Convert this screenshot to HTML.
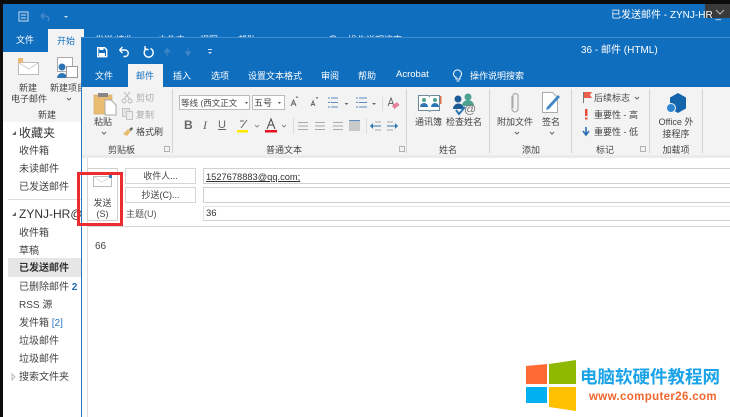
<!DOCTYPE html>
<html><head><meta charset="utf-8">
<style>
html,body{margin:0;padding:0;background:#fff}
#p{position:relative;width:730px;height:417px;overflow:hidden;background:#fff;font-family:"Liberation Sans","Noto Sans CJK SC",sans-serif;color:#444;font-size:9px}
#p div{position:absolute;white-space:nowrap}
.t{line-height:14px}
.w{color:#fff}
.c{text-align:center}
.n{font-size:10px;color:#444;left:19px;line-height:16px}
.sep{background:#d4d4d4;width:1px}
.g{color:#555}
svg{position:absolute;overflow:visible}
</style></head><body><div id="p">
<!-- frame -->
<div style="left:0;top:0;width:730px;height:4px;background:#0c0c0c"></div>
<div style="left:0;top:0;width:3px;height:417px;background:#0c0c0c"></div>
<div style="left:3px;top:4px;width:727px;height:48px;background:#106ebe"></div>
<div style="left:705px;top:4px;width:25px;height:14px;background:#3a3a3a"></div>
<svg style="left:0;top:0" width="730" height="60">
<path d="M19 12h9v9h-9zM21 15h5M21 18h5" fill="none" stroke="#a9c8e6" stroke-width="1.200"/>
<path d="M41 16l3-3M41 16l3 3M41 16h5a3 3 0 0 1 2 5" fill="none" stroke="#4a8bc8" stroke-width="1.300"/>
<path d="M64 16h4l-2 2z" fill="#cfe2f3"/>
<path d="M716 10l4 4 4-4" fill="none" stroke="#bbb" stroke-width="1"/>
<path d="M337 40a4 4 0 1 1 0-.1" fill="none" stroke="#cfe2f3"/>
</svg>
<div class="t w" style="left:611px;top:9px;font-size:10px">已发送邮件 - ZYNJ-HR _</div>
<div class="t w" style="left:16px;top:33px">文件</div>
<div class="t w" style="left:95px;top:33px">发送/接收</div>
<div class="t w" style="left:158px;top:33px">文件夹</div>
<div class="t w" style="left:200px;top:33px">视图</div>
<div class="t w" style="left:238px;top:33px">帮助</div>
<div class="t w" style="left:348px;top:33px">操作说明搜索</div>
<div style="left:48px;top:29px;width:36px;height:23px;background:#f3f3f3"></div>
<div class="t" style="left:57px;top:34px;color:#106ebe">开始</div>
<!-- outer ribbon -->
<div style="left:3px;top:52px;width:78px;height:70px;background:#f3f3f3"></div>
<svg style="left:0;top:50px" width="82" height="50">
<rect x="18.500" y="12.500" width="20" height="12" fill="#fff" stroke="#bbb"/><path d="M19 13l10 6 9-6" fill="none" stroke="#ccc"/><rect x="18" y="8" width="5" height="5" fill="#e9b872"/>
<rect x="57.500" y="7.500" width="15" height="14" fill="#fff" stroke="#aaa"/><circle cx="62" cy="17" r="3.500" fill="#2e75b6"/><path d="M57 28a5 5 0 0 1 10 0z" fill="#2e75b6"/><rect x="66.500" y="16.500" width="11" height="11" fill="#fff" stroke="#999"/>
<path d="M67 48l2 2 2-2" fill="none" stroke="#666"/>
</svg>
<div class="t c" style="left:8px;top:81px;width:40px">新建</div>
<div class="t c" style="left:6px;top:92px;width:46px">电子邮件</div>
<div class="t" style="left:50px;top:81px">新建项目</div>
<div class="t" style="left:38px;top:108px">新建</div>
<!-- folder pane -->
<div style="left:3px;top:122px;width:78px;height:295px;background:#fff"></div>
<svg style="left:11px;top:128px" width="6" height="90"><path d="M1 7l4-4v4zM1 88l4-4v4z" fill="#666"/></svg>
<div style="left:19px;top:124px;font-size:12px;line-height:18px;color:#333">收藏夹</div>
<div class="n" style="top:144px">收件箱</div>
<div class="n" style="top:162px">未读邮件</div>
<div class="n" style="top:180px">已发送邮件</div>
<div style="left:8px;top:199px;width:73px;height:1px;background:#ddd"></div>
<div style="left:19px;top:205px;font-size:12px;line-height:18px;color:#333;width:62px;overflow:hidden">ZYNJ-HR@</div>
<div class="n" style="top:226px">收件箱</div>
<div class="n" style="top:244px">草稿</div>
<div style="left:8px;top:258px;width:73px;height:19px;background:#e6e6e6"></div>
<div class="n" style="top:261px;font-weight:bold;color:#333">已发送邮件</div>
<div class="n" style="top:280px;width:62px;overflow:hidden">已删除邮件 <b style="color:#1e6bb0">2</b></div>
<div class="n" style="top:298px">RSS 源</div>
<div class="n" style="top:316px">发件箱 <span style="color:#2a77bd">[2]</span></div>
<div class="n" style="top:334px">垃圾邮件</div>
<div class="n" style="top:352px">垃圾邮件</div>
<div class="n" style="top:370px">搜索文件夹</div>
<svg style="left:11px;top:373px" width="6" height="8"><path d="M1 1l3 3-3 3z" fill="none" stroke="#bbb"/></svg>
<!-- compose window -->
<div style="left:81px;top:37px;width:649px;height:380px;background:#fff;border-left:1px solid #2a77bd;box-sizing:border-box"></div>
<div style="left:82px;top:37px;width:648px;height:50px;background:#106ebe;border-top:1px solid #3f8ccf;box-sizing:border-box"></div>
<svg style="left:82px;top:37px" width="150" height="28">
<path d="M15.700 10.700h7l2 2v7h-9z" fill="none" stroke="#fff" stroke-width="1.400"/><rect x="17" y="16" width="6" height="3.500" fill="#fff"/><rect x="17.500" y="10.500" width="4" height="2.500" fill="#fff"/>
<path d="M37.500 13l3-3M37.500 13l3 3M37.500 13h6a3.300 3.300 0 0 1 0 6.500h-2" fill="none" stroke="#fff" stroke-width="1.400"/>
<path d="M68.500 11.500a4.500 4.500 0 1 1-4 .2M63 9v3.500h3.500" fill="none" stroke="#fff" stroke-width="1.400"/>
<path d="M85 19v-5M82.500 15l2.500-3.500 2.500 3.500z" fill="#3f86c7" stroke="#3f86c7"/>
<path d="M106 11v5M103.500 15l2.500 3.500 2.500-3.500z" fill="#3f86c7" stroke="#3f86c7"/>
<path d="M126 15h4l-2 2z" fill="#cfe2f3"/>
<rect x="126" y="12" width="4" height="1" fill="#cfe2f3"/>
</svg>
<div class="t w" style="left:581px;top:44px;font-size:10px">36 - 邮件 (HTML)</div>
<div class="t w" style="left:95px;top:69px">文件</div>
<div style="left:128px;top:64px;width:35px;height:23px;background:#f3f3f3"></div>
<div class="t" style="left:136px;top:69px;color:#106ebe">邮件</div>
<div class="t w" style="left:173px;top:69px">插入</div>
<div class="t w" style="left:211px;top:69px">选项</div>
<div class="t w" style="left:248px;top:69px">设置文本格式</div>
<div class="t w" style="left:321px;top:69px">审阅</div>
<div class="t w" style="left:358px;top:69px">帮助</div>
<div class="t w" style="left:396px;top:68px;font-size:9.500px">Acrobat</div>
<svg style="left:452px;top:69px" width="12" height="14"><path d="M3 8a4 4 0 1 1 5 0v2H4V8zM4.500 12h3" fill="none" stroke="#fff"/></svg>
<div class="t w" style="left:470px;top:69px">操作说明搜索</div>
<!-- ribbon -->
<div style="left:82px;top:87px;width:648px;height:68px;background:#f3f3f3"></div>
<div style="left:82px;top:155px;width:648px;height:3px;background:#ebebeb"></div>
<div class="sep" style="left:172px;top:89px;height:64px"></div>
<div class="sep" style="left:406px;top:89px;height:64px"></div>
<div class="sep" style="left:489px;top:89px;height:64px"></div>
<div class="sep" style="left:571px;top:89px;height:64px"></div>
<div class="sep" style="left:649px;top:89px;height:64px"></div>
<div class="sep" style="left:702px;top:89px;height:64px"></div>
<!-- clipboard -->
<svg style="left:92px;top:90px" width="80" height="60">
<rect x="2" y="5" width="18" height="19" fill="#e8bd72" stroke="#c9a45f" stroke-width=".6"/><rect x="6" y="3" width="10" height="4" fill="#888"/>
<path d="M13 10h6l5 5v10H13z" fill="#fff" stroke="#aaa"/>
<path d="M32 2l6 7M38 2l-6 7" stroke="#bbb" fill="none"/><circle cx="32" cy="11" r="2" fill="none" stroke="#bbb"/><circle cx="38" cy="11" r="2" fill="none" stroke="#bbb"/>
<rect x="30.500" y="18.500" width="7" height="8" fill="#e4e4e4" stroke="#c4c4c4"/><rect x="34.500" y="21.500" width="6" height="8" fill="#eee" stroke="#c4c4c4"/>
<path d="M31 44l5-5 3 2-4 5z" fill="#e8bd72"/><path d="M37 39l3-2 1 2-2 2z" fill="#666"/>
</svg>
<div class="t c" style="left:90px;top:115px;width:26px">粘贴</div>
<svg style="left:101px;top:131px" width="6" height="4"><path d="M1 1l2 2 2-2" fill="none" stroke="#666"/></svg>
<div class="t" style="left:136px;top:91px;color:#aaa">剪切</div>
<div class="t" style="left:136px;top:108px;color:#aaa">复制</div>
<div class="t" style="left:136px;top:125px;color:#444">格式刷</div>
<div class="t" style="left:108px;top:143px">剪贴板</div>
<!-- font -->
<div style="left:179px;top:95px;width:71px;height:15px;background:#fff;border:1px solid #bbb;box-sizing:border-box;line-height:14px;padding-left:1px;font-size:8.500px;overflow:hidden">等线 (西文正文</div>
<div style="left:252px;top:95px;width:33px;height:15px;background:#fff;border:1px solid #bbb;box-sizing:border-box;line-height:14px;padding-left:1px;font-size:9px">五号</div>
<svg style="left:160px;top:85px" width="330" height="70">
<path d="M85 17h3l-1.500 2zM118 17h3l-1.500 2z" fill="#555"/>
<path d="M131 21l2.500-6 2.500 6M132 19h3M151 21l2-5 2 5M152 19.500h2" fill="none" stroke="#666"/>
<path d="M136 13l1-1.500 1 1.500M156 12l1 1.500 1-1.500" fill="none" stroke="#444" stroke-width=".6"/>
<path d="M168 13h2M171 13h7M168 17.500h2M171 17.500h7M168 22h2M171 22h7" stroke="#5b8ec0" fill="none"/>
<path d="M184.500 18h4l-2 2z" fill="#666"/>
<path d="M196 13h2M199 13h8M196 17.500h2M199 17.500h8M196 22h2M199 22h8" stroke="#5b8ec0" fill="none"/>
<path d="M212 18h4l-2 2z" fill="#666"/>
<path d="M222.500 12v14" stroke="#ddd"/>
<path d="M228 21l3-8 3 8M229 18.500h4" fill="none" stroke="#666"/><path d="M232 21l5-4 2.500 3-5 4z" fill="#e8819a"/>
<path d="M87 35l-6 8" stroke="#666" fill="none"/>
<path d="M80 36h4" stroke="#666"/>
<rect x="77" y="45" width="11" height="2.500" fill="#ffe800"/>
<rect x="105" y="45" width="12" height="2.500" fill="#e81123"/>
<path d="M107 44l4-10 4 10M108.500 40h5" fill="none" stroke="#444"/>
<path d="M95 40l2 2 2-2M122 40l2 2 2-2" fill="none" stroke="#777" stroke-width=".8"/>
<path d="M133.500 33v16" stroke="#ddd"/>
<path d="M138 37.500h10M138 41h10M138 44.500h10M155 37.500h10M155 41h10M155 44.500h10M173 37.500h10M173 41h10M173 44.500h10" stroke="#aaa" fill="none"/>
<rect x="189" y="36" width="11" height="10" fill="#c9c9c9"/><path d="M189 35.500h11" stroke="#5b8ec0"/>
<path d="M206.500 33v16" stroke="#ddd"/>
<path d="M215 37h6M215 45h6" stroke="#aaa" fill="none"/><path d="M210 41h11" stroke="#2e75b6"/><path d="M210 41l3-3v6z" fill="#2e75b6"/>
<path d="M227 37h6M227 45h6" stroke="#aaa" fill="none"/><path d="M227 41h11" stroke="#2e75b6"/><path d="M238 41l-3-3v6z" fill="#2e75b6"/>
</svg>
<div style="left:184px;top:118px;font-size:12px;font-weight:bold;line-height:14px;color:#666">B</div>
<div style="left:203px;top:118px;font-size:12px;font-style:italic;line-height:14px;color:#666;font-family:'Liberation Serif',serif">I</div>
<div style="left:218px;top:118px;font-size:11px;text-decoration:underline;line-height:14px;color:#666">U</div>
<div class="t" style="left:266px;top:143px">普通文本</div>
<!-- names -->
<svg style="left:415px;top:92px" width="70" height="30">
<path d="M3.500 3.500h10a2 2 0 0 1 1 1 2 2 0 0 1 1-1h9v15h-9l-1 1-1-1h-10z" fill="#fff" stroke="#6f8a98"/>
<rect x="25" y="4" width="1.500" height="8" fill="#e0704c"/>
<circle cx="9" cy="8" r="2" fill="#4da38f"/><path d="M5 15a4 4 0 0 1 8 0z" fill="#2e75b6"/><circle cx="20" cy="8" r="2" fill="#4da38f"/><path d="M16 15a4 4 0 0 1 8 0z" fill="#2e75b6"/>
<circle cx="43" cy="7" r="3.500" fill="#1e5a96"/><path d="M38 17a5.500 5.500 0 0 1 11 0z" fill="#1e5a96"/><circle cx="53" cy="5" r="3.500" fill="#4da38f"/><path d="M47 14a6 6 0 0 1 12 0z" fill="#4da38f"/><path d="M41 18l3 4 6-7" fill="none" stroke="#2e75b6" stroke-width="2"/>
</svg>
<div style="left:464px;top:102px;font-size:12px;color:#777;line-height:14px">@</div>
<div class="t" style="left:415px;top:115px">通讯簿</div>
<div class="t" style="left:446px;top:115px">检查姓名</div>
<div class="t" style="left:439px;top:143px">姓名</div>
<!-- add -->
<svg style="left:505px;top:90px" width="60" height="26">
<path d="M7 6v13a3 3 0 0 0 6 0V6a2.500 2.500 0 0 0-5 0v12" fill="none" stroke="#aaa" stroke-width="1.200"/>
<path d="M37.500 2.500h10l5 5v15h-15z" fill="#fff" stroke="#aaa"/><path d="M42 17l11-12 2 2-11 12-3 1z" fill="#3f86c7"/>
</svg>
<div class="t" style="left:497px;top:115px">附加文件</div>
<div class="t" style="left:542px;top:115px">签名</div>
<svg style="left:514px;top:131px" width="50" height="4"><path d="M1 1l2 2 2-2M36 1l2 2 2-2" fill="none" stroke="#666"/></svg>
<div class="t" style="left:522px;top:143px">添加</div>
<!-- tags -->
<svg style="left:580px;top:90px" width="14" height="50">
<path d="M3.500 2v11" stroke="#777"/><path d="M4 2h8l-2 3 2 3H4z" fill="#e8604c"/>
<rect x="5" y="19" width="2.500" height="7" fill="#e84c3d"/><rect x="5" y="27.500" width="2.500" height="2" fill="#e84c3d"/>
<path d="M6 37v7M3 41l3 4 3-4" fill="none" stroke="#2e6fb5" stroke-width="1.600"/>
</svg>
<div class="t" style="left:594px;top:91px">后续标志</div>
<svg style="left:634px;top:96px" width="6" height="4"><path d="M1 1l2 2 2-2" fill="none" stroke="#666"/></svg>
<div class="t" style="left:594px;top:108px">重要性 - 高</div>
<div class="t" style="left:594px;top:125px">重要性 - 低</div>
<div class="t" style="left:596px;top:143px">标记</div>
<!-- dialog launchers -->
<svg style="left:160px;top:145px" width="500" height="9"><path d="M4.500 1.500h5v5h-5zM239.500 1.500h5v5h-5zM480.500 1.500h5v5h-5z" fill="none" stroke="#999" stroke-width=".7"/></svg>
<!-- office addin -->
<svg style="left:664px;top:92px" width="28" height="26"><path d="M14 1l8 4.500v11L14 21l-8-4.500v-11z" fill="#1565ad"/><circle cx="7" cy="16" r="4.500" fill="#2e86d0" stroke="#f3f3f3"/></svg>
<div class="t c" style="left:654px;top:115px;width:44px">Office 外</div>
<div class="t c" style="left:654px;top:127px;width:44px">接程序</div>
<div class="t c" style="left:654px;top:143px;width:44px">加载项</div>
<!-- form -->
<div style="left:87px;top:158px;width:1px;height:259px;background:#dcdcdc"></div>
<div style="left:87px;top:168px;width:31px;height:53px;background:#fff;border:1px solid #d0d0d0;box-sizing:border-box"></div>
<svg style="left:93px;top:174px" width="22" height="14"><path d="M0.500 2.500h18v10h-18z" fill="#fff" stroke="#bbb"/><path d="M1 3l8 5 9-5" fill="none" stroke="#ddd"/><rect x="16" y="1" width="3" height="3" fill="#2e75b6"/></svg>
<div class="t c" style="left:87px;top:196px;width:31px">发送</div>
<div class="t c" style="left:87px;top:207px;width:31px">(S)</div>
<div class="c t" style="left:125px;top:168px;width:71px;height:16px;background:#fff;border:1px solid #d6d6d6;box-sizing:border-box">收件人...</div>
<div class="c t" style="left:125px;top:187px;width:71px;height:16px;background:#fff;border:1px solid #d6d6d6;box-sizing:border-box">抄送(C)...</div>
<div class="t g" style="left:126px;top:207px">主题(U)</div>
<div style="left:203px;top:168px;width:527px;height:16px;background:#fff;border:1px solid #d0d0d0;border-right:0;box-sizing:border-box"></div>
<div style="left:203px;top:187px;width:527px;height:16px;background:#fff;border:1px solid #d0d0d0;border-right:0;box-sizing:border-box"></div>
<div style="left:203px;top:206px;width:527px;height:15px;background:#fff;border:1px solid #e4e4e4;border-bottom-color:#d0d0d0;border-right:0;box-sizing:border-box"></div>
<div class="t" style="left:206px;top:170px;color:#333;text-decoration:underline;font-size:9.300px">1527678883@qq.com;</div>
<div class="t" style="left:206px;top:207px;color:#333;font-size:9.500px">36</div>
<div style="left:88px;top:226px;width:642px;height:1px;background:#d4d4d4"></div>
<div class="t" style="left:95px;top:240px;color:#444;font-size:10px">66</div>
<!-- red box -->
<div style="left:77px;top:172px;width:46px;height:54px;border:3px solid #ee2b2f;box-sizing:border-box"></div>
<!-- watermark -->
<svg style="left:510px;top:340px" width="220" height="77">
<polygon points="16,26 37,24 37,44 16,44" fill="#ff6a33"/>
<polygon points="39,24 66,20 66,44 39,44" fill="#8fb800"/>
<polygon points="16,47 37,47 37,63 16,63" fill="#00b0f0"/>
<polygon points="39,47 66,47 66,71 39,67" fill="#ffc000"/>
</svg>
<div style="left:580px;top:367px;font-size:17.500px;font-weight:bold;line-height:20px;color:#1aa3e8">电脑软硬件教程网</div>
<div style="left:589px;top:390px;font-size:11.500px;font-weight:bold;line-height:14px;color:#f0662e;letter-spacing:.35px">www.computer26.com</div>
</div></body></html>
